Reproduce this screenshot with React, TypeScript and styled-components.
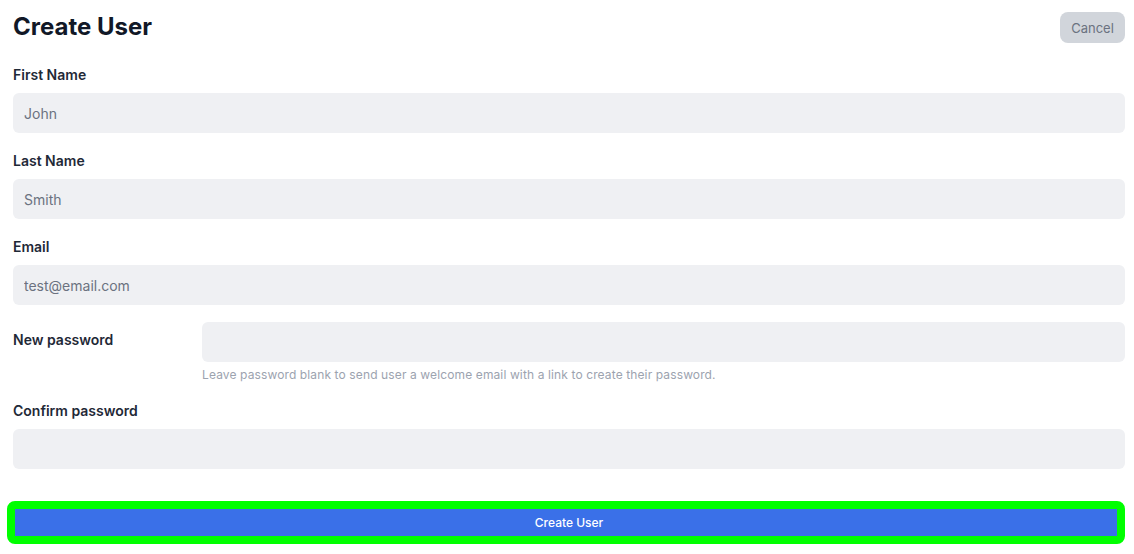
import React from "react";
import styled, { createGlobalStyle } from "styled-components";

const GlobalStyle = createGlobalStyle`
  html, body { margin: 0; padding: 0; background: #ffffff; }
  body { font-family: Inter, "Noto Sans", sans-serif; color: #1f2937; }
  * { box-sizing: border-box; }
`;

const Page = styled.div`
  padding: 11px 9px 0 13px;
`;

const Header = styled.div`
  display: flex;
  align-items: center;
  justify-content: space-between;
  height: 32px;
`;

const Title = styled.h1`
  margin: 0;
  font-size: 24px;
  line-height: 32px;
  font-weight: 700;
  color: #111827;
`;

const CancelButton = styled.button`
  height: 31px;
  width: 65px;
  margin-top: 1px;
  border: none;
  border-radius: 8px;
  background: #d1d5db;
  color: #6b7280;
  font-family: inherit;
  font-size: 13px;
  cursor: pointer;
`;

const Form = styled.form`
  display: flex;
  flex-direction: column;
  margin-top: 22px;
`;

const Field = styled.div<{ $gapTop?: number }>`
  display: flex;
  flex-direction: column;
  gap: 8px;
  margin-top: ${(p) => p.$gapTop ?? 0}px;
`;

const Label = styled.label`
  font-size: 14px;
  line-height: 20px;
  font-weight: 600;
  color: #1f2937;
`;

const Input = styled.input`
  height: 40px;
  width: 100%;
  border: none;
  border-radius: 6px;
  background: #eff0f3;
  padding: 0 11px;
  font-family: inherit;
  font-size: 14px;
  color: #1f2937;
  outline: none;
  &::placeholder { color: #6b7280; }
`;

const InlineRow = styled.div`
  display: grid;
  grid-template-columns: 189px 1fr;
  margin-top: 17px;
`;

const InlineLabel = styled(Label)`
  align-self: start;
  padding-top: 8px;
`;

const InlineBody = styled.div`
  display: flex;
  flex-direction: column;
  gap: 5px;
`;

const Hint = styled.p`
  margin: 0;
  font-size: 12px;
  line-height: 16px;
  letter-spacing: 0.12px;
  color: #9ca3af;
`;

const SubmitButton = styled.button`
  margin-top: 32px;
  margin-left: -6px;
  width: calc(100% + 6px);
  height: 43px;
  padding: 0 0 1px 6px;
  border: 8px solid #00ff00;
  border-radius: 8px;
  background: #3a70e8;
  color: #ffffff;
  font-family: inherit;
  font-size: 12px;
  font-weight: 500;
  cursor: pointer;
`;

export default function App() {
  return (
    <>
      <GlobalStyle />
      <Page>
        <Header>
          <Title>Create User</Title>
          <CancelButton type="button">Cancel</CancelButton>
        </Header>
        <Form onSubmit={(e) => e.preventDefault()}>
          <Field>
            <Label>First Name</Label>
            <Input placeholder="John" />
          </Field>
          <Field $gapTop={18}>
            <Label>Last Name</Label>
            <Input placeholder="Smith" />
          </Field>
          <Field $gapTop={18}>
            <Label>Email</Label>
            <Input placeholder="test@email.com" />
          </Field>
          <InlineRow>
            <InlineLabel>New password</InlineLabel>
            <InlineBody>
              <Input type="password" />
              <Hint>
                Leave password blank to send user a welcome email with a link to
                create their password.
              </Hint>
            </InlineBody>
          </InlineRow>
          <Field $gapTop={18}>
            <Label>Confirm password</Label>
            <Input type="password" />
          </Field>
          <SubmitButton type="submit">Create User</SubmitButton>
        </Form>
      </Page>
    </>
  );
}
